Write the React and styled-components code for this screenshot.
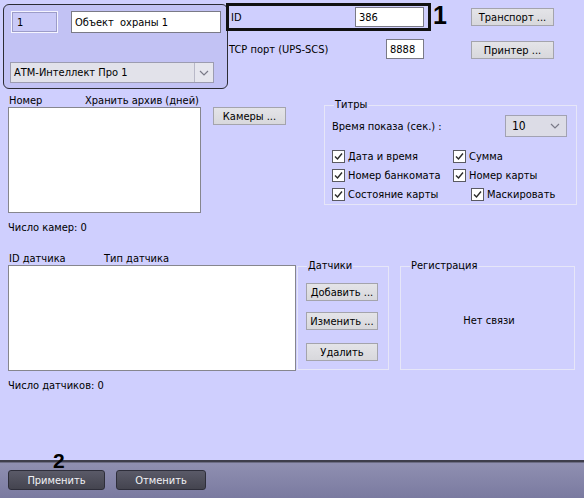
import React from 'react';
import styled, { createGlobalStyle } from 'styled-components';

const GlobalStyle = createGlobalStyle`
  html, body {
    margin: 0;
    padding: 0;
    background: #cfcffe;
  }
  * {
    box-sizing: border-box;
  }
`

const Page = styled.div`
  position: relative;
  width: 584px;
  height: 498px;
  display: flex;
  flex-direction: column;
  background: #cfcffe;
  font-family: "DejaVu Sans Condensed", "Liberation Sans", Arial, sans-serif;
  font-size: 11px;
  color: #000;
  overflow: hidden;
`

const Main = styled.div`
  height: 460px;
  display: flex;
  flex-direction: column;
`

const TopRow = styled.div`
  display: flex;
  height: 92px;
`

const ObjectPanel = styled.div`
  margin: 4px 0 0 3px;
  width: 225px;
  height: 85px;
  border: 1px solid #2c2c34;
  border-radius: 6px;
  background: #c2c2f4;
  padding: 6px 0 0 7px;
  display: flex;
  flex-direction: column;
`

const InputRow = styled.div`
  display: flex;
  gap: 13px;
`

const TextBox = styled.div`
  width: ${p => p.$w}px;
  height: ${p => p.$h || 19}px;
  background: ${p => p.$tint ? '#cacaf8' : '#fff'};
  border: 1px solid ${p => p.$tint ? '#f4f4ff' : '#7a7a86'};
  box-shadow: ${p => p.$tint ? 'inset 0 0 0 1px #9c9cc8' : 'none'};
  display: flex;
  align-items: center;
  padding-left: ${p => p.$tint ? 5 : 3}px;
  white-space: nowrap;
  flex-shrink: 0;
`

const ComboBox = styled.div`
  margin-top: 29px;
  width: 204px;
  height: 21px;
  margin-left: -1px;
  background: #e2e2ea;
  border: 1px solid #9c9cb0;
  display: flex;
  align-items: center;
  padding-left: 3px;
`

const ComboText = styled.span`
  flex: 1;
`

const ArrowBox = styled.span`
  width: 19px;
  height: 19px;
  border-left: 1px solid #b8b8c8;
  background: #e6e6ee;
  display: flex;
  align-items: center;
  justify-content: center;
`

const IdColumn = styled.div`
  width: 205px;
  margin-left: -2px;
  margin-top: 3px;
  display: flex;
  flex-direction: column;
`

const IdBox = styled.div`
  height: 28px;
  border: 3px solid #111;
  display: flex;
  align-items: center;
  justify-content: space-between;
  padding: 0 4px 0 2px;
`

const TcpRow = styled.div`
  margin-top: 8px;
  display: flex;
  align-items: center;
  justify-content: space-between;
  padding: 0 7px 0 3px;
`

const Marker = styled.div`
  font-family: "Liberation Sans", Arial, sans-serif;
  font-weight: bold;
  line-height: 1;
`

const TopMarker = styled(Marker)`
  width: 40px;
  margin-top: 3px;
  padding-left: 2px;
  font-size: 25px;
`

const ButtonColumn = styled.div`
  margin-top: 8px;
  display: flex;
  flex-direction: column;
  gap: 15px;
`

const Button = styled.div`
  width: ${p => p.$w || 72}px;
  height: 18px;
  background: linear-gradient(#e4e4e8, #d8d8dc);
  border: 1px solid #a4a4ac;
  display: flex;
  align-items: center;
  justify-content: center;
  white-space: nowrap;
  flex-shrink: 0;
  margin-top: ${p => p.$top || 0}px;
`

const SectionRow = styled.div`
  display: flex;
  margin-top: ${p => p.$top}px;
`

const ListColumn = styled.div`
  margin-left: 8px;
  width: ${p => p.$w}px;
  display: flex;
  flex-direction: column;
  flex-shrink: 0;
`

const ListHeader = styled.div`
  height: 13px;
  display: flex;
  line-height: 13px;
  padding-left: 1px;
  white-space: nowrap;
`

const HeaderCell = styled.span`
  width: ${p => p.$w}px;
`

const ListBox = styled.div`
  height: 106px;
  background: #fff;
  border: 1px solid #86868e;
`

const CountText = styled.div`
  margin-top: 8px;
  height: 13px;
  line-height: 13px;
`

const CameraButtonWrap = styled.div`
  margin: 13px 0 0 12px;
`

const Group = styled.div`
  position: relative;
  margin: ${p => p.$margin};
  width: ${p => p.$w}px;
  height: ${p => p.$h}px;
  border: 1px solid #e6e6f8;
  flex-shrink: 0;
`

const GroupTitle = styled.span`
  position: absolute;
  top: -8px;
  left: 9px;
  padding: 0 1px;
  background: #cfcffe;
  line-height: 14px;
`

const GroupBody = styled.div`
  display: flex;
  flex-direction: column;
  padding: ${p => p.$pad};
  gap: ${p => p.$gap || 0}px;
  height: 100%;
`

const TimeRow = styled.div`
  display: flex;
  align-items: center;
  justify-content: space-between;
  padding-right: 9px;
`

const SmallSelect = styled.div`
  width: 62px;
  height: 22px;
  background: #dcdce6;
  border: 1px solid #a2a2b2;
  display: flex;
  align-items: center;
  justify-content: space-between;
  padding: 0 6px 0 6px;
  font-size: 12px;
`

const CheckGrid = styled.div`
  margin-top: 13px;
  display: flex;
  flex-direction: column;
  gap: 6px;
`

const CheckRow = styled.div`
  display: flex;
  height: 13px;
`

const CheckItem = styled.label`
  display: flex;
  align-items: center;
  gap: 3px;
  width: ${p => p.$w}px;
  white-space: nowrap;
  line-height: 13px;
`

const Box = styled.span`
  width: 13px;
  height: 13px;
  border: 1px solid #5a5a62;
  background: #fff;
  display: flex;
  align-items: center;
  justify-content: center;
  flex-shrink: 0;
`

const Centered = styled.div`
  height: 100%;
  display: flex;
  align-items: center;
  justify-content: center;
  padding-left: 3px;
  padding-top: 5px;
`

const BottomBar = styled.div`
  height: 38px;
  border-top: 2px solid #3e3e4c;
  background: linear-gradient(#9090b2, #7a7aa0);
  box-shadow: inset 0 1px 0 #6c6c84;
  display: flex;
  align-items: flex-start;
  padding: 8px 0 0 8px;
  gap: 11px;
`

const DarkButton = styled.div`
  width: ${p => p.$w}px;
  height: 20px;
  border: 1px solid #2e2e3a;
  border-radius: 3px;
  background: linear-gradient(#5a5a68, #44444f);
  color: #f2f2f6;
  display: flex;
  align-items: center;
  justify-content: center;
`

const BottomMarker = styled(Marker)`
  position: absolute;
  left: 53px;
  top: 450px;
  font-size: 21px;
`

const Chevron = () => (
  <svg width="10" height="6" viewBox="0 0 10 6">
    <path d="M1 1 L5 5 L9 1" fill="none" stroke="#7a7a88" strokeWidth="1.2" />
  </svg>
)

const Check = ({ label, w }) => (
  <CheckItem $w={w}>
    <Box>
      <svg width="11" height="11" viewBox="0 0 11 11">
        <path d="M2 5.5 L4.5 8 L9 2.5" fill="none" stroke="#2a2a2a" strokeWidth="1.4" />
      </svg>
    </Box>
    {label}
  </CheckItem>
)

const App = () => {
  return (
    <Page>
      <GlobalStyle />
      <Main>
        <TopRow>
          <ObjectPanel>
            <InputRow>
              <TextBox $w={47} $h={22} $tint>1</TextBox>
              <TextBox $w={150} $h={22}>Объект&nbsp; охраны 1</TextBox>
            </InputRow>
            <ComboBox>
              <ComboText>АТМ-Интеллект Про 1</ComboText>
              <ArrowBox><Chevron /></ArrowBox>
            </ComboBox>
          </ObjectPanel>
          <IdColumn>
            <IdBox>
              <span>ID</span>
              <TextBox $w={69} $h={20}>386</TextBox>
            </IdBox>
            <TcpRow>
              <span>TCP порт (UPS-SCS)</span>
              <TextBox $w={38} $h={20}>8888</TextBox>
            </TcpRow>
          </IdColumn>
          <TopMarker>1</TopMarker>
          <ButtonColumn>
            <Button $w={83}>Транспорт ...</Button>
            <Button $w={83}>Принтер ...</Button>
          </ButtonColumn>
        </TopRow>

        <SectionRow $top={2}>
          <ListColumn $w={193}>
            <ListHeader>
              <HeaderCell $w={76}>Номер</HeaderCell>
              <HeaderCell>Хранить архив (дней)</HeaderCell>
            </ListHeader>
            <ListBox />
            <CountText>Число камер: 0</CountText>
          </ListColumn>
          <CameraButtonWrap>
            <Button $w={73}>Камеры ...</Button>
          </CameraButtonWrap>
          <Group $margin="11px 0 0 38px" $w={253} $h={100}>
            <GroupTitle>Титры</GroupTitle>
            <GroupBody $pad="9px 0 0 7px">
              <TimeRow>
                <span>Время показа (сек.) :</span>
                <SmallSelect>
                  <span>10</span>
                  <Chevron />
                </SmallSelect>
              </TimeRow>
              <CheckGrid>
                <CheckRow>
                  <Check w={121} label="Дата и время" />
                  <Check label="Сумма" />
                </CheckRow>
                <CheckRow>
                  <Check w={121} label="Номер банкомата" />
                  <Check label="Номер карты" />
                </CheckRow>
                <CheckRow>
                  <Check w={139} label="Состояние карты" />
                  <Check label="Маскировать" />
                </CheckRow>
              </CheckGrid>
            </GroupBody>
          </Group>
        </SectionRow>

        <SectionRow $top={18}>
          <ListColumn $w={288}>
            <ListHeader>
              <HeaderCell $w={95}>ID датчика</HeaderCell>
              <HeaderCell>Тип датчика</HeaderCell>
            </ListHeader>
            <ListBox />
            <CountText>Число датчиков: 0</CountText>
          </ListColumn>
          <Group $margin="14px 0 0 1px" $w={92} $h={104}>
            <GroupTitle>Датчики</GroupTitle>
            <GroupBody $pad="16px 0 0 8px" $gap={11}>
              <Button>Добавить ...</Button>
              <Button>Изменить ...</Button>
              <Button $top={2}>Удалить</Button>
            </GroupBody>
          </Group>
          <Group $margin="14px 0 0 11px" $w={175} $h={104}>
            <GroupTitle>Регистрация</GroupTitle>
            <Centered>Нет связи</Centered>
          </Group>
        </SectionRow>
      </Main>
      <BottomBar>
        <DarkButton $w={97}>Применить</DarkButton>
        <DarkButton $w={90}>Отменить</DarkButton>
      </BottomBar>
      <BottomMarker>2</BottomMarker>
    </Page>
  );
};

export default App;
